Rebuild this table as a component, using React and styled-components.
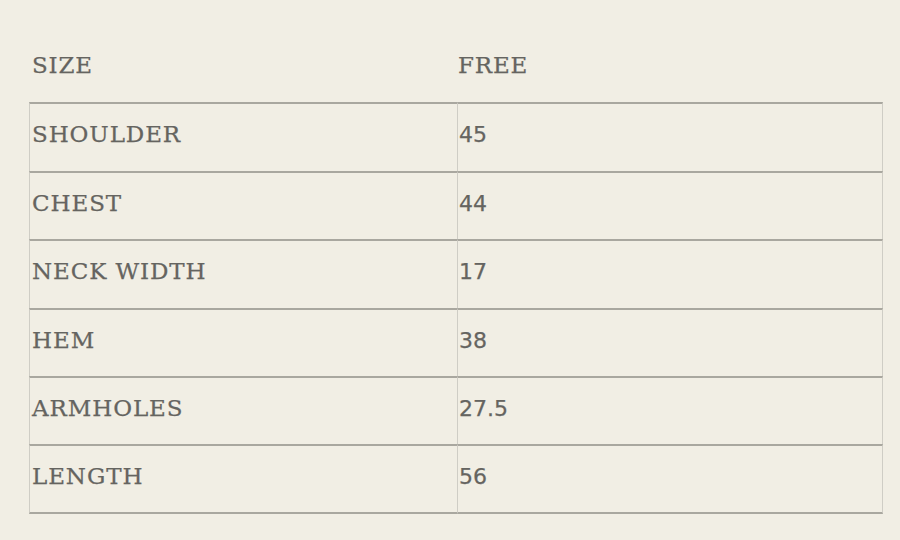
import React from "react";
import styled, { createGlobalStyle } from "styled-components";

const Global = createGlobalStyle`
  html, body { margin: 0; padding: 0; background: #f1eee4; }
  body { width: 900px; height: 540px; overflow: hidden; }
`;

const Page = styled.div`
  box-sizing: border-box;
  width: 900px;
  height: 540px;
  padding: 0 16px 0 29px;
  background: #f1eee4;
  color: #656460;
`;

const Table = styled.div`
  display: grid;
  grid-template-columns: 428px 426px;
  width: 855px;
`;

const HeadCell = styled.div`
  box-sizing: border-box;
  height: 102px;
  padding: 54px 0 0 ${(p) => (p.$value ? "1px" : "3px")};
  font-family: "DejaVu Serif", serif;
  font-size: 23px;
  line-height: 23px;
  letter-spacing: 0.8px;
  -webkit-text-stroke: 0.25px currentColor;
`;

const Cell = styled.div`
  box-sizing: border-box;
  height: ${(p) => p.$h}px;
  border-top: 2px solid #a9a79f;
  border-bottom: ${(p) => (p.$last ? "2px solid #a9a79f" : "none")};
  border-left: 1px solid #cfcdc5;
  border-right: ${(p) => (p.$value ? "1px solid #cfcdc5" : "none")};
  padding: 19px 0 0 ${(p) => (p.$value ? "1px" : "2px")};
  font-family: ${(p) =>
    p.$value ? '"DejaVu Sans", sans-serif' : '"DejaVu Serif", serif'};
  font-size: ${(p) => (p.$value ? "22px" : "23px")};
  line-height: 23px;
  letter-spacing: ${(p) => (p.$value ? "0" : "0.9px")};
  -webkit-text-stroke: 0.25px currentColor;
`;

const rows = [
  ["SHOULDER", "45"],
  ["CHEST", "44"],
  ["NECK WIDTH", "17"],
  ["HEM", "38"],
  ["ARMHOLES", "27.5"],
  ["LENGTH", "56"],
];
const heights = [69, 68, 69, 68, 68, 70];

export default function App() {
  return (
    <>
      <Global />
      <Page>
        <Table>
          <HeadCell>SIZE</HeadCell>
          <HeadCell $value>FREE</HeadCell>
          {rows.map(([k, v], i) => (
            <React.Fragment key={k}>
              <Cell $h={heights[i]} $last={i === rows.length - 1}>{k}</Cell>
              <Cell $h={heights[i]} $value $last={i === rows.length - 1}>{v}</Cell>
            </React.Fragment>
          ))}
        </Table>
      </Page>
    </>
  );
}
